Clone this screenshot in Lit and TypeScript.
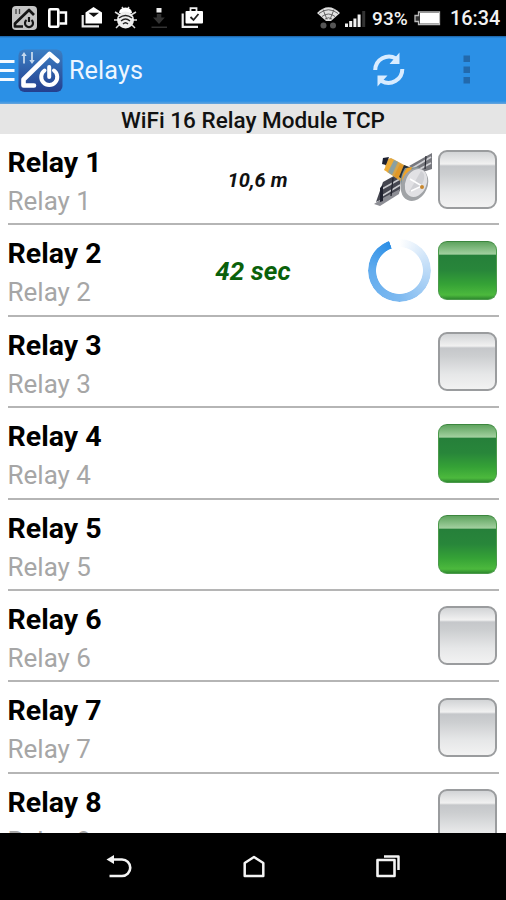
import { LitElement, html, css, svg, nothing } from "lit";
import { customElement, property } from "lit/decorators.js";

type Extra = "distance" | "timer";
interface Relay {
  n: number;
  on: boolean;
  extra?: Extra;
  value?: string;
}

const relays: Relay[] = [
  { n: 1, on: false, extra: "distance", value: "10,6 m" },
  { n: 2, on: true, extra: "timer", value: "42 sec" },
  { n: 3, on: false },
  { n: 4, on: true },
  { n: 5, on: true },
  { n: 6, on: false },
  { n: 7, on: false },
  { n: 8, on: false },
];

@customElement("status-bar")
class StatusBar extends LitElement {
  static styles = css`
    :host {
      display: flex;
      justify-content: space-between;
      height: 36px;
      padding: 0 6px 0 12px;
      box-sizing: border-box;
      background: #000;
      color: #f2f2f2;
      font: 500 19px/38px Roboto, sans-serif;
    }
    .group { display: flex; }
    .notes { gap: 11px; }
    svg { display: block; height: 36px; flex: none; }
    .signal { margin-left: 4px; }
    .percent { margin-left: 6px; width: 38px; white-space: nowrap; font-weight: 500; font-size: 19px; letter-spacing: 0.1px; }
    .battery { margin-left: 4px; }
    .time { margin-left: 9px; width: 50px; font-size: 19.8px; white-space: nowrap; }
  `;
  render() {
    return html`
      <div class="group notes">
        <svg width="25" viewBox="0 0 25 36">
          <rect y="6" width="25" height="24" rx="4" fill="#c4c4c4" />
          <path d="M4 9v5M7.500 9v5" stroke="#444" stroke-width="1.300" />
          <path d="M22 15l-5-5L3 23.500v3h8" fill="none" stroke="#151515" stroke-width="2.700" stroke-linejoin="round" />
          <path d="M14.500 20a4 4 0 1 0 5 0M17 17v5" fill="none" stroke="#151515" stroke-width="2.200" />
        </svg>
        <svg width="20" viewBox="0 0 20 36">
          <rect x="1.300" y="9.200" width="9" height="17.500" rx="1" fill="none" stroke="#fff" stroke-width="2.600" />
          <path d="M11.500 12.500h6.500v11h-6.500" fill="none" stroke="#fff" stroke-width="2.400" />
        </svg>
        <svg width="24" viewBox="0 0 24 36">
          <path d="M3.700 15v11.300H20" fill="none" stroke="#e8e8e8" stroke-width="2.200" />
          <path d="M6.500 12.500L14.500 7l8.500 5.500v11H6.500z" fill="#fff" />
          <path d="M9.500 12.700h10.500l-5.300 4.300z" fill="#111" />
        </svg>
        <svg width="24" viewBox="0 0 24 36">
          <path d="M1 12l5 3M22 12l-5 3M0 20h5M18 20h5M2 28l4-4M21 28l-4-4M8 7l2 3M15 7l-2 3" stroke="#ddd" stroke-width="1.500" />
          <path d="M5 13a6.500 5.500 0 0 1 13 0z" fill="#fff" />
          <ellipse cx="11.500" cy="20" rx="8.500" ry="8.500" fill="#eee" />
          <path d="M5 18q6.500-5 13 0M7 21q4.500-4 9 0M9 24q2.500-2.500 5 0" fill="none" stroke="#222" stroke-width="1.400" />
        </svg>
        <svg width="20" viewBox="0 0 20 36">
          <rect x="7.500" y="8" width="5" height="4.500" fill="#eee" />
          <path d="M7.800 14h4.500v3.500h3.500L10 24l-6-6.500h3.800zM2.500 26.500H18v1.500H2.500z" fill="#333" />
        </svg>
        <svg width="24" viewBox="0 0 24 36">
          <path d="M2.700 13.500v13.300H18" fill="none" stroke="#eee" stroke-width="2.200" />
          <path d="M10.500 11V8.200h6V11" fill="none" stroke="#eee" stroke-width="1.800" />
          <rect x="5.500" y="11" width="17.500" height="12.500" rx="1" fill="#fff" />
          <path d="M10.500 17l3 3 5-6" fill="none" stroke="#222" stroke-width="1.800" />
        </svg>
      </div>
      <div class="group">
        <svg width="25" viewBox="0 0 25 36">
          <path d="M1 13Q12.500 1.500 24 13L15 21h-5z" fill="#e2e2e2" />
          <path d="M3 13.500q9.500-7.500 19 0M6 16.500q6.500-5 13 0M9 19q3.500-2.500 7 0M7 9.500l4 10M18 9.500l-4 10" fill="none" stroke="#555" stroke-width="0.900" />
          <circle cx="7.500" cy="25.500" r="3" fill="#555" />
          <circle cx="17" cy="25.500" r="3" fill="#555" />
        </svg>
        <svg class="signal" width="21" viewBox="0 0 21 36">
          <path d="M0 23.500h3V27H0zM4.200 21h3v6h-3zM8.400 18.500h3V27h-3zM12.600 14.500h3V27h-3z" fill="#f2f2f2" />
          <path d="M17.200 11h3v16h-3z" fill="#333" />
        </svg>
        <span class="percent">93%</span>
        <svg class="battery" width="27" viewBox="0 0 27 36">
          <path d="M4.500 12h21v12.500h-21v-3H1v-6h3.500z" fill="#333" stroke="#bbb" stroke-width="1.300" />
          <path d="M6 13h19v10.500H6z" fill="#fff" />
        </svg>
        <span class="time">16:34</span>
      </div>
    `;
  }
}

@customElement("app-header")
class AppHeader extends LitElement {
  static styles = css`
    :host {
      display: flex;
      align-items: center;
      height: 68px;
      box-sizing: border-box;
      background: linear-gradient(#1c5d9c 0, #2b90e6 2px, #2b90e6 65px, #68a6dc 68px);
      color: #eef6ff;
    }
    svg { display: block; flex: none; }
    .logo { margin-left: 3px; }
    h1 { margin: 1px auto 0 6px; font: 400 25.2px/68px Roboto, sans-serif; letter-spacing: 0.1px; }
    .dots { margin: 0 32px 0 56px; }
  `;
  render() {
    return html`
      <svg width="15" height="68" viewBox="0 0 15 68">
        <path d="M0 25.500h14.500M0 34.500h14.500M0 43.500h14.500" stroke="#f4faff" stroke-width="3.200" />
      </svg>
      <svg class="logo" width="45" height="68" viewBox="0 0 45 68">
        <defs>
          <linearGradient id="tile" x1="0" y1="0" x2="0" y2="1">
            <stop offset="0" stop-color="#3b7fc4" />
            <stop offset="1" stop-color="#243f8e" />
          </linearGradient>
        </defs>
        <rect x="0.500" y="13.500" width="44" height="42.500" rx="6" fill="url(#tile)" />
        <path d="M6 27.500V18M14 16v9.500" stroke="#c5d9ed" stroke-width="1.800" />
        <path d="M3.300 20L6 16l2.700 4zM11.300 24l2.700 4 2.700-4z" fill="#c5d9ed" />
        <path d="M39.500 25l-8-7L5.500 43.500v6h10.500" fill="none" stroke="#fff" stroke-width="4.600" stroke-linecap="round" stroke-linejoin="round" />
        <path d="M26.500 34.500a8 8 0 1 0 9.500 0" fill="none" stroke="#fff" stroke-width="4" stroke-linecap="round" />
        <path d="M31.200 31v10" stroke="#fff" stroke-width="4" stroke-linecap="round" />
      </svg>
      <h1>Relays</h1>
      <svg width="34" height="68" viewBox="0 0 34 68">
        <g fill="none" stroke="#d9ecff" stroke-width="4">
          <path d="M3.200 34A13.800 13.800 0 0 1 24 22.500" />
          <path d="M30.300 33A13.800 13.800 0 0 1 9.500 45" />
        </g>
        <path d="M27.500 16.500V28H17.500zM5.500 50.500V39.500H15.500z" fill="#d9ecff" />
      </svg>
      <svg class="dots" width="12" height="68" viewBox="0 0 12 68">
        <path d="M1.500 19.500h6.500V26H1.500zM1.500 30.500h6.500V37H1.500zM1.500 41h6.500v6.500H1.500z" fill="#2269ac" />
      </svg>
    `;
  }
}

@customElement("relay-row")
class RelayRow extends LitElement {
  @property({ attribute: false }) relay!: Relay;

  static styles = css`
    :host {
      display: grid;
      grid-template-columns: 1fr 120px 1fr;
      align-items: start;
      flex: none;
      height: 91.4px;
      margin: 0 7px 0 8px;
      box-sizing: border-box;
      border-bottom: 2px solid #b5b5b5;
      font-family: Roboto, sans-serif;
    }
    .name { font-weight: 700; font-size: 28.5px; line-height: 38px; margin: 10px 0 0 -0.5px; color: #000; }
    .desc { font-size: 26px; line-height: 38px; color: #a6a6a6; margin-left: -0.5px; }
    .value { text-align: center; font-style: italic; font-weight: 700; white-space: nowrap; }
    .distance { font-size: 20px; line-height: 92px; color: #111; padding-left: 8px; }
    .timer { font-size: 26px; line-height: 92px; color: #0a610a; letter-spacing: 0.1px; margin-left: -1px; }
    .side { display: flex; justify-content: flex-end; padding: 15.5px 2.5px 0 0; gap: 6px; }
    svg { display: block; flex: none; }
    .spinner {
      width: 63px;
      height: 63px;
      margin: -1.5px 1px 0 0;
      border-radius: 50%;
      background: conic-gradient(#fff 0deg, #d8e9fa 50deg, #7db9f0 180deg, #62acee 270deg, #2c8fe6 340deg, #fff 341deg);
      -webkit-mask: radial-gradient(circle closest-side, transparent 23px, #000 23.8px);
      mask: radial-gradient(circle closest-side, transparent 23px, #000 23.8px);
    }
    .toggle {
      width: 59px;
      height: 59px;
      box-sizing: border-box;
      border-radius: 9px;
      flex: none;
    }
    .off {
      border: 2px solid #9a9c9e;
      background: linear-gradient(#d2d4d6 0, #f1f1f1 12px, #c5c7ca 14px, #ccced0 22px, #e6e7e8 40px, #f2f2f2 100%);
    }
    .on {
      border: 1.5px solid #4c9a4c;
      border-top-color: #3c863e;
      background: linear-gradient(#5fa45f 0, #a1cf9e 12px, #26803a 13.500px, #28863a 28px, #35a236 42px, #4cb93d 53px, #2f8a2f 100%);
    }
  `;

  private satellite() {
    return svg`<svg width="60" height="60" viewBox="0 0 60 60">
      <path d="M4 52L11 32 29 22 28 41z" fill="#454650" />
      <path d="M2 54l9-6 17-9-1 5L8 56z" fill="#8c8d94" />
      <path d="M10 39l18-10M10 46l18-11" stroke="#c9cace" stroke-width="1.500" />
      <path d="M21 28l-2 18" stroke="#24252f" stroke-width="1.300" />
      <path d="M8 38l3-3v16l-3 1z" fill="#20222f" />
      <path d="M37 16L60 3v16L48 23z" fill="#77787e" />
      <path d="M39 19L59 7M44 21l15-8" stroke="#d0d1d5" stroke-width="1.700" />
      <path d="M54 6l-1 13" stroke="#292a32" stroke-width="1.200" />
      <path d="M12 10l7-2 19 10-8 14L15 22z" fill="#d6a44a" />
      <path d="M11 8l6-1-3 8-4-1z" fill="#1d2030" />
      <path d="M17 9l6 1-6 13-5-3z" fill="#edab35" />
      <path d="M22 10l4 2-6 13-4-3z" fill="#8aa0a1" />
      <path d="M28 14l4 2-6 13-4-3z" fill="#e19827" />
      <path d="M32 15l8 3-6 13-7-4z" fill="#242d38" />
      <path d="M33 18l14-1-15 24q-7-10 1-23z" fill="#809395" />
      <path d="M35 18l5-1-7 23q-7-11 2-22z" fill="#f0a42a" />
      <ellipse cx="42.500" cy="34.500" rx="13" ry="17" transform="rotate(24 42.500 34.500)" fill="#a0a3a6" />
      <ellipse cx="44" cy="33" rx="10.500" ry="14.500" transform="rotate(24 44 33)" fill="#e1e1e4" />
      <path d="M37 42L49 21q7 4-1 17z" fill="#cfd0d4" />
      <path d="M38 29l12 7-11 5" fill="none" stroke="#fff" stroke-width="1.500" />
      <circle cx="50" cy="37" r="2" fill="#c7862c" />
    </svg>`;
  }

  render() {
    const r = this.relay;
    return html`
      <div>
        <div class="name">Relay ${r.n}</div>
        <div class="desc">Relay ${r.n}</div>
      </div>
      <div class="value ${r.extra ?? ""}">${r.value ?? nothing}</div>
      <div class="side">
        ${r.extra === "distance" ? this.satellite() : nothing}
        ${r.extra === "timer" ? html`<div class="spinner"></div>` : nothing}
        <div class="toggle ${r.on ? "on" : "off"}"></div>
      </div>
    `;
  }
}

@customElement("nav-bar")
class NavBar extends LitElement {
  static styles = css`
    :host { display: flex; justify-content: space-between; align-items: center; height: 67px; padding: 0 104px 0 105px; box-sizing: border-box; background: #000; }
    svg { display: block; }
  `;
  render() {
    return html`
      <svg width="28" height="30" viewBox="0 0 28 30">
        <path d="M8 7.500h9a8 8 0 0 1 0 16.500H4.500" fill="none" stroke="#f4f4f4" stroke-width="2.600" />
        <path d="M1.500 7.500L9 3v9z" fill="#f4f4f4" />
      </svg>
      <svg width="28" height="30" viewBox="0 0 28 30">
        <path d="M4.700 24V11L14 5 23.300 11v13z" fill="none" stroke="#f4f4f4" stroke-width="2.500" stroke-linejoin="round" />
      </svg>
      <svg width="28" height="30" viewBox="0 0 28 30">
        <rect x="3.500" y="8" width="17" height="16" fill="none" stroke="#f4f4f4" stroke-width="2.600" stroke-linejoin="round" />
        <path d="M10 4.500h14.500v13.500" fill="none" stroke="#f4f4f4" stroke-width="2.500" stroke-linejoin="round" />
      </svg>
    `;
  }
}

@customElement("app-root")
class AppRoot extends LitElement {
  static styles = css`
    :host { display: flex; flex-direction: column; height: 900px; background: #fff; overflow: hidden; }
    status-bar, app-header, nav-bar { flex: none; }
    .title {
      flex: none;
      height: 30px;
      background: #e5e5e5;
      text-align: center;
      font: 500 22.5px/33px Roboto, sans-serif;
      color: #111;
    }
    .list { flex: 1; min-height: 0; overflow: hidden; display: flex; flex-direction: column; background: #fff; }
  `;
  render() {
    return html`
      <status-bar></status-bar>
      <app-header></app-header>
      <div class="title">WiFi 16 Relay Module TCP</div>
      <div class="list">${relays.map((r) => html`<relay-row .relay=${r}></relay-row>`)}</div>
      <nav-bar></nav-bar>
    `;
  }
}
